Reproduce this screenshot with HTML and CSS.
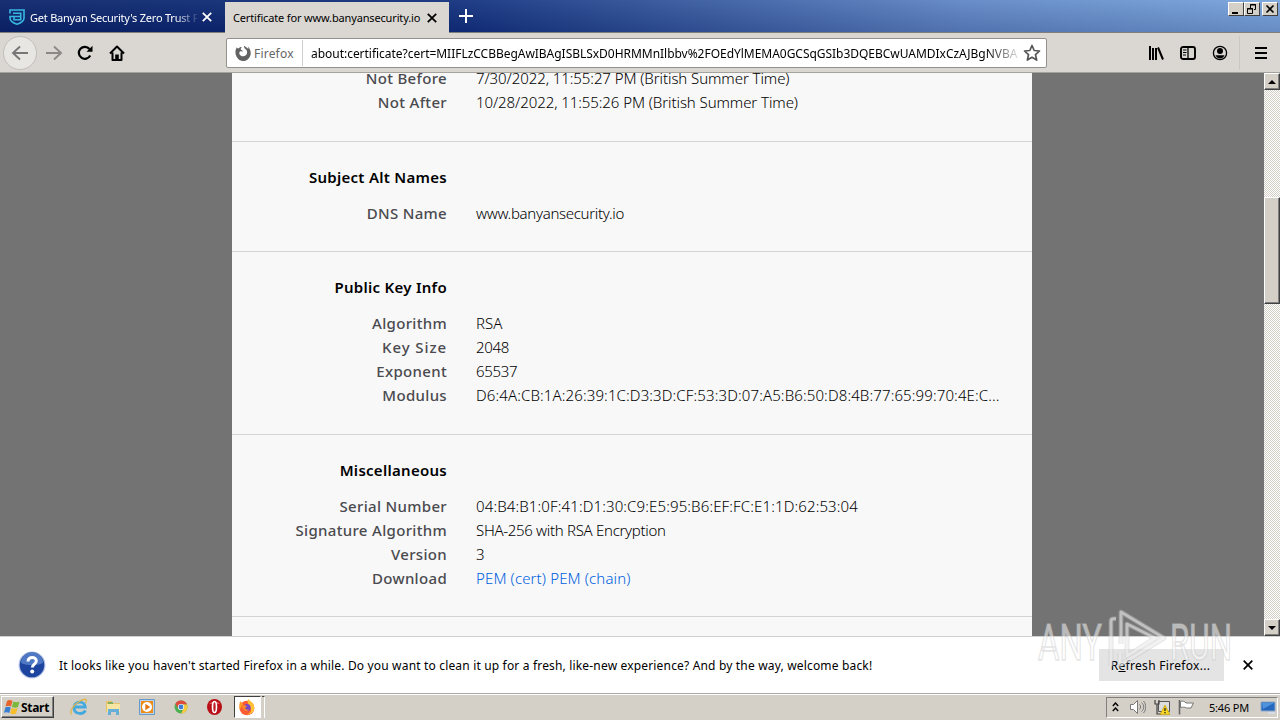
FILE: index.html
```
<!DOCTYPE html>
<html lang="en">
<head>
<meta charset="UTF-8" />
<meta name="viewport" content="width=device-width, initial-scale=1" />
<title>Certificate for www.banyansecurity.io</title>
<link rel="stylesheet" href="styles.css">
</head>
<body>

<header class="tabbar">
  <div class="tab tab-first">
    <svg class="favicon" width="16" height="16" viewBox="0 0 16 16" fill="none" stroke="#38b6e2" stroke-width="1.6"><path d="M1 4.500V1h14v8c0 3-3 5-7 6.200C4 14 1 12 1 9V7.500h4"/><path d="M4 4.300h7.700v6.500H5V7.500h6.500"/></svg>
    <span class="tab-title">Get Banyan Security's Zero Trust P</span>
    <svg class="tab-close" width="10" height="10" viewBox="0 0 10 10" stroke="currentColor" stroke-width="1.8"><path d="M.8.8l8.4 8.4M9.2.8L.8 9.2"/></svg>
  </div>
  <div class="tab tab-active">
    <span class="tab-title">Certificate for www.banyansecurity.io</span>
    <svg class="tab-close" width="10" height="10" viewBox="0 0 10 10" stroke="currentColor" stroke-width="1.8"><path d="M.8.8l8.4 8.4M9.2.8L.8 9.2"/></svg>
  </div>
  <svg class="new-tab" width="14" height="14" viewBox="0 0 14 14" stroke="#fff" stroke-width="2"><path d="M7 0v14M0 7h14"/></svg>
  <div class="window-buttons">
    <span class="win-btn"><svg width="14" height="12" viewBox="0 0 14 12"><path d="M3 9h6v2H3z"/></svg></span>
    <span class="win-btn"><svg width="14" height="12" viewBox="0 0 14 12" fill="none" stroke="#000"><path d="M5.5 5V1.5h5v5H9M5 2h6M2.500 5.500h5v5h-5zM2 6h6"/></svg></span>
    <span class="win-btn win-close"><svg width="14" height="12" viewBox="0 0 14 12" stroke="#000" stroke-width="1.6"><path d="M3.500 2.500l7 7M10.500 2.500l-7 7"/></svg></span>
  </div>
</header>

<nav class="toolbar">
  <span class="back"><svg width="18" height="16" viewBox="0 0 18 16" fill="none" stroke="#777" stroke-width="1.9"><path d="M17 8H2M9 1.500L2 8l7 6.500"/></svg></span>
  <svg class="forward" width="18" height="16" viewBox="0 0 18 16" fill="none" stroke="#8b8986" stroke-width="1.9"><path d="M1 8h15M9 1.500L16 8l-7 6.500"/></svg>
  <svg class="reload" width="16" height="16" viewBox="0 0 16 16" fill="none" stroke="#000" stroke-width="2.200"><path d="M13.200 10.500A6 6 0 1 1 12.500 4"/><path d="M15.500.8v6H9.500z" fill="#000" stroke="none"/></svg>
  <svg class="home" width="16" height="16" viewBox="0 0 16 16" fill="none" stroke="#000" stroke-width="2" stroke-linejoin="round"><path d="M1 8.500L8 1.500l7 7M3.500 7.500V15h9V7.500"/><path d="M6.200 15V9.500h3.600V15z" fill="#000" stroke="none"/></svg>
  <div class="urlbar">
    <svg class="identity-icon" width="16" height="16" viewBox="0 0 16 16"><path d="M1.800 2.300C0 5 0 9 1.500 11.500 3 14.500 5.500 16 8.200 16c4 0 7.500-3.500 7.500-7.800 0-2.700-1-5.200-3-6.700.6 1 .7 1.700.6 2.500C12 2 10.500 2.200 9 .7c0 2 .5 2.500 2 3.800 2.300 2.500 1 6.500-2.800 6.800-3 .2-4.700-2.500-3.500-4.500.8-.8 2-.5 3-.1.300-1-.8-1.700-2-2.200 0-1 .3-1.800 1-2.500C5 2 4 2.700 3.500 3.500c-.8 0-1.400-.4-1.700-1.200z" fill="#626262"/></svg>
    <span class="identity">Firefox</span>
    <span class="url">about:certificate?cert=MIIFLzCCBBegAwIBAgISBLSxD0HRMMnIlbbv%2FOEdYlMEMA0GCSqGSIb3DQEBCwUAMDIxCzAJBgNVBA</span>
    <svg class="star" width="18" height="18" viewBox="0 0 18 18" fill="none" stroke="#555" stroke-width="1.700" stroke-linejoin="round"><path d="M9 1.500l2.200 5 5.300.5-4 3.700 1.200 5.400L9 13.300l-4.700 2.800 1.200-5.400-4-3.700 5.300-.5z"/></svg>
  </div>
  <div class="tools">
    <svg class="library" width="16" height="16" viewBox="0 0 16 16" stroke="#000" stroke-width="2"><path d="M2 1v14M5 3v12M8 3v12M10 2.500l5 12"/></svg>
    <svg class="sidebar" width="16" height="14" viewBox="0 0 16 14" fill="none" stroke="#000" stroke-width="1.900"><rect x="1" y="1" width="14" height="12" rx="2"/><path d="M8 1v12" stroke-width="1.300"/><path d="M3 4h3.500M3 6.500h3.500M3 9h3" stroke-width="1"/></svg>
    <svg class="account" width="16" height="16" viewBox="0 0 16 16"><circle cx="8" cy="8" r="6.600" fill="none" stroke="#000" stroke-width="1.300"/><circle cx="8" cy="6" r="3"/><path d="M3.500 10.200h9C11.500 12.500 10 13.500 8 13.500s-3.500-1-4.500-3.300z"/></svg>
    <span class="divider"></span>
    <svg class="menu" width="12" height="12" viewBox="0 0 12 12" stroke="#000" stroke-width="2"><path d="M0 1h12M0 6h12M0 11h12"/></svg>
  </div>
</nav>

<main class="viewport">
  <div class="page">
    <article class="certificate">
      <section class="group group-validity">
        <dl>
          <dt>Not Before</dt><dd class="date">7/30/2022, 11:55:27 PM (British Summer Time)</dd>
          <dt>Not After</dt><dd class="date">10/28/2022, 11:55:26 PM (British Summer Time)</dd>
        </dl>
      </section>
      <section class="group">
        <h2>Subject Alt Names</h2>
        <dl>
          <dt>DNS Name</dt><dd class="tight">www.banyansecurity.io</dd>
        </dl>
      </section>
      <section class="group">
        <h2>Public Key Info</h2>
        <dl>
          <dt>Algorithm</dt><dd>RSA</dd>
          <dt class="wide">Key Size</dt><dd class="tight">2048</dd>
          <dt>Exponent</dt><dd class="tight">65537</dd>
          <dt>Modulus</dt><dd class="hex">D6:4A:CB:1A:26:39:1C:D3:3D:CF:53:3D:07:A5:B6:50:D8:4B:77:65:99:70:4E:C...</dd>
        </dl>
      </section>
      <section class="group">
        <h2>Miscellaneous</h2>
        <dl>
          <dt>Serial Number</dt><dd class="hex">04:B4:B1:0F:41:D1:30:C9:E5:95:B6:EF:FC:E1:1D:62:53:04</dd>
          <dt>Signature Algorithm</dt><dd class="tight">SHA-256 with RSA Encryption</dd>
          <dt>Version</dt><dd>3</dd>
          <dt>Download</dt><dd class="hex"><a>PEM (cert)</a> <a>PEM (chain)</a></dd>
        </dl>
      </section>
      <section class="group"></section>
    </article>
  </div>
  <div class="scrollbar">
    <span class="scroll-btn"><svg width="8" height="4" viewBox="0 0 8 4"><path d="M4 0l4 4H0z"/></svg></span>
    <span class="thumb"></span>
    <span class="scroll-btn scroll-down"><svg width="8" height="4" viewBox="0 0 8 4"><path d="M0 0h8L4 4z"/></svg></span>
  </div>
</main>

<aside class="notification">
  <svg class="help" width="28" height="28" viewBox="0 0 28 28"><circle cx="14" cy="14" r="13.500" fill="#b9c6e4"/><circle cx="14" cy="14" r="12.300" fill="#1d459f"/><path d="M3 12a11 11 0 0 1 22 0c-7 3-15 3-22 0z" fill="#4f78c4"/><path d="M10 10.500c0-5.500 8.500-5 8.300-.5-.1 3-4 3.200-4 6.500" fill="none" stroke="#fff" stroke-width="3"/><circle cx="14.200" cy="20.500" r="2" fill="#fff"/></svg>
  <span class="message">It looks like you haven't started Firefox in a while. Do you want to clean it up for a fresh, like-new experience? And by the way, welcome back!</span>
  <button class="refresh">R<u>e</u>fresh Firefox...</button>
  <svg class="dismiss" width="10" height="10" viewBox="0 0 10 10" stroke="#000" stroke-width="1.700"><path d="M.7.7l8.600 8.600M9.300.7L.7 9.300"/></svg>
</aside>

<footer class="taskbar">
  <button class="start">
    <svg width="17" height="16" viewBox="0 0 17 16"><path d="M3 2c2-1.500 4-1 5.500 0L7 7.500C5.500 6.500 3.500 6.500 1.500 7.500z" fill="#e8622c"/><path d="M9.300 2.500c2 1 4 1 6.200 0L14 8c-2 1-4 1-6 0z" fill="#7cb83b"/><path d="M1.300 8.500c2-1.200 4-1 5.500 0L5.300 14c-2-1.200-3.500-1-5.300-.2z" fill="#3b7fd0"/><path d="M7.600 9c2 1 4 1 6 0l-1.500 5.500c-2 1-4 1-6 0z" fill="#f6bd2d"/></svg>
    Start
  </button>
  <div class="quick">
    <svg width="18" height="18" viewBox="0 0 18 18" fill="none"><path d="M15.500 12.500c-3 5-12 3.500-11.500-3.500.5-6.500 11-6.500 11.300 0H5" stroke="#43a9df" stroke-width="2.800"/><path d="M2 16C-2 15 4 6 10 3c5-3 8-2 5.500 2" stroke="#ddb64a" stroke-width="1.300"/></svg>
    <svg width="18" height="18" viewBox="0 0 18 18"><path d="M2 3h6l1 2h7v9H2z" fill="#e8c468"/><path d="M3 6h13v8H3z" fill="#f7e5a3"/><path d="M4 17v-6h11v6h-3v-3H7v3z" fill="#67afd8"/><path d="M4 5h5" stroke="#5fa85d" stroke-width="1.500"/></svg>
    <svg width="18" height="18" viewBox="0 0 18 18"><path d="M1.500 1.500h15v15h-15z" fill="#b7d5ef" stroke="#6999c9"/><path d="M3 3h12v12H3z" fill="#ef8b16"/><circle cx="9" cy="9" r="5" fill="#fff"/><path d="M7.300 5.800l5 3.200-5 3.200z" fill="#e47713"/></svg>
    <svg width="18" height="18" viewBox="0 0 18 18"><circle cx="9" cy="9" r="6.500" fill="#4caf50"/><path d="M3.300 5.800A6.500 6.500 0 0 1 15 6.500H9L6.200 10.500z" fill="#df4a3c"/><path d="M15 6.500A6.500 6.500 0 0 1 9 15.500l3-5.500-3-3.500z" fill="#f9ca3e"/><circle cx="9" cy="9" r="3.100" fill="#fff"/><circle cx="9" cy="9" r="2.400" fill="#3e7bd5"/></svg>
    <svg width="18" height="18" viewBox="0 0 18 18"><ellipse cx="8.500" cy="9" rx="7.500" ry="8" fill="#b80f18"/><path d="M3 6a7 7 0 0 1 11 0z" fill="#dd5a5e"/><ellipse cx="8.500" cy="9" rx="2" ry="5.500" fill="#c2202a" stroke="#fff" stroke-width="1.600"/></svg>
  </div>
  <div class="task-active">
    <svg width="18" height="18" viewBox="0 0 18 18"><circle cx="9" cy="10" r="7.300" fill="#ff5a32"/><path d="M10 1c2 2 6.500 4 6.300 9-.3 5-5 7-8 6.500 5-1 6-5 3.500-8C10 6 9 4 10 1z" fill="#ffc233"/><path d="M2 3c0 2-1.500 4-.3 9L5 6z" fill="#ff9b28"/><circle cx="9" cy="9.500" r="3.600" fill="#7648c9"/><path d="M4 8c2-2 3 0 5 .2L7 10c1 2 3 2 4 1-1 3-6 3-7-3z" fill="#ff8a24"/></svg>
  </div>
  <span class="task-edge"></span>
  <div class="tray">
    <svg class="chevrons" width="7" height="10" viewBox="0 0 7 10" fill="none" stroke="#000" stroke-width="1.400"><path d="M.8 4l2.700-3 2.700 3M.8 9l2.700-3 2.700 3"/></svg>
    <svg class="sound" width="16" height="16" viewBox="0 0 16 16" fill="#fff" stroke="#777"><path d="M.5 5.500h3l4-4v13l-4-4h-3z"/><path d="M9.500 5.500c1.500 1.500 1.500 3.500 0 5M11.500 3.500c3 2.500 3 6.500 0 9M13.500 2c3 3.500 3 8.500 0 12" fill="none"/></svg>
    <svg class="network" width="16" height="16" viewBox="0 0 16 16"><path d="M4.500 2.500h11v10h-11z" fill="#ddd" stroke="#555"/><path d="M1 1v4h4V1M3 5v10h4" fill="none" stroke="#444" stroke-width="1.200"/><path d="M11 6l5 9.500H6z" fill="#f8d521" stroke="#b59400" stroke-width=".6"/><path d="M11 9v3M11 13v1.300" stroke="#222" stroke-width="1.300"/></svg>
    <svg class="flag" width="17" height="16" viewBox="0 0 17 16"><path d="M1.500 1v14.500" stroke="#666" stroke-width="1.600"/><path d="M2.500 2.500c3-1 4 0 5.500 1.500h7.500L13 9H8.500c-2-1-3-1-6-.5z" fill="#fff" stroke="#777"/></svg>
    <span class="clock">5:46 PM</span>
    <svg class="desktop" width="16" height="13" viewBox="0 0 16 13"><path d="M1 1h14v9H1z" fill="#2467bd" stroke="#8ea8cb"/><path d="M2 2h12L3 8z" fill="#4f93dc"/><path d="M8 11h7v2H8z" fill="#d5dce5"/></svg>
  </div>
</footer>

<!-- Recording overlay -->
<svg class="watermark" width="204" height="66" viewBox="0 0 204 66">
  <g fill="#fff" fill-opacity=".5" stroke="#c4c4c4" stroke-opacity=".45" stroke-width="1.600">
    <text x="2" y="54" textLength="64" lengthAdjust="spacingAndGlyphs">ANY</text>
    <text x="134" y="54" textLength="62" lengthAdjust="spacingAndGlyphs">RUN</text>
  </g>
  <g fill="none" stroke-linejoin="round">
    <path d="M75 60V15q0-3 5-2M85 38V6l43 26-44 27V47M91 18v32l28-18z" stroke="#bbb" stroke-opacity=".35" stroke-width="5"/>
    <path d="M75 60V15q0-3 5-2M85 38V6l43 26-44 27V47M91 18v32l28-18z" stroke="#fff" stroke-opacity=".45" stroke-width="3"/>
  </g>
</svg>

</body>
</html>
```
FILE: styles.css
```
* {
  box-sizing: border-box;
}
body {
  margin: 0;
  width: 1280px;
  height: 720px;
  overflow: hidden;
  display: flex;
  flex-direction: column;
  font-family: "Noto Sans", "DejaVu Sans", sans-serif;
  font-size: 12px;
  color: #000;
  position: relative;
}
svg {
  display: block;
  flex: none;
}
button {
  font: inherit;
  border: none;
}

/* Tabs */
.tabbar {
  height: 33px;
  flex: none;
  display: flex;
  background: linear-gradient(rgba(255,255,255,0.06), rgba(0,0,50,0.15)), linear-gradient(90deg, #0a246a, #102f7c 35%, #5f86c4 75%, #78a4dc);
  border-bottom: 1px solid #807e7b;
}
.tab {
  display: flex;
  align-items: center;
}
.tab-first {
  width: 225px;
  padding: 2px 0 0 9px;
  color: #fff;
}
.tab-title {
  overflow: hidden;
  white-space: nowrap;
  font-size: 11px;
}
.tab-first .tab-title {
  width: 167px;
  margin-left: 5px;
  letter-spacing: -0.22px;
  -webkit-mask-image: linear-gradient(90deg, #000 145px, transparent 170px);
}
.tab-first .tab-close {
  margin-left: 5px;
}
.tab-active {
  width: 224px;
  height: 31px;
  margin-top: 2px;
  padding-left: 8px;
  background: #dad7d2;
}
.tab-active .tab-title {
  width: 188px;
  letter-spacing: -0.15px;
}
.tab-active .tab-close {
  margin-left: 6px;
}
.new-tab {
  margin: 9px 0 0 10px;
}
.window-buttons {
  display: flex;
  margin: 2px 2px 0 auto;
}
.win-btn {
  width: 16px;
  height: 14px;
  background: #d4d0c8;
  border: 1px solid;
  border-color: #fff #404040 #404040 #fff;
}
.win-close {
  margin-left: 2px;
}

/* Toolbar */
.toolbar {
  height: 40px;
  flex: none;
  display: flex;
  align-items: center;
  background: #dad7d2;
  border-bottom: 1px solid #a5a29d;
}
.back {
  width: 34px;
  height: 34px;
  margin-left: 3px;
  display: flex;
  align-items: center;
  justify-content: center;
  border: 1px solid #c2bfba;
  border-radius: 50%;
  background: #e8e6e2;
}
.forward { margin-left: 8px; }
.reload { margin-left: 14px; }
.home { margin-left: 16px; }
.urlbar {
  width: 821px;
  height: 30px;
  margin-left: 101px;
  padding-left: 8px;
  display: flex;
  align-items: center;
  background: #fff;
  border: 1px solid #93918d;
  border-radius: 2px;
}
.identity {
  width: 49px;
  height: 26px;
  line-height: 27px;
  margin-left: 3px;
  border-right: 1px solid #ccc;
  color: #666;
  letter-spacing: 0.2px;
}
.url {
  width: 707px;
  margin-left: 8px;
  padding-top: 1px;
  overflow: hidden;
  white-space: nowrap;
  letter-spacing: -0.03px;
  -webkit-mask-image: linear-gradient(90deg, #000 675px, transparent 712px);
}
.star { margin-left: 5px; }
.tools {
  display: flex;
  align-items: center;
  height: 36px;
  margin-left: 101px;
}
.sidebar { margin-left: 16px; }
.account { margin-left: 16px; }
.divider {
  width: 1px;
  height: 34px;
  margin-left: 11px;
  background: #cbc8c3;
}
.menu { margin-left: 15px; }

/* Certificate page */
.viewport {
  height: 563px;
  flex: none;
  display: flex;
}
.page {
  flex: 1;
  overflow: hidden;
  padding-left: 232px;
  background: #737373;
}
.certificate {
  width: 800px;
  height: 600px;
  margin-top: -7px;
  background: #f8f8f8;
  font-size: 15px;
  line-height: 24px;
}
.group {
  padding: 23px 0 26.3px;
  border-top: 1px solid #d4d4d6;
}
.group-validity {
  padding: 0 0 27px;
  border-top: none;
}
.group h2 {
  width: 215px;
  margin: 0 0 12px;
  font-size: 15px;
  font-weight: 600;
  letter-spacing: 0.28px;
  text-align: right;
}
.group dl {
  display: grid;
  grid-template-columns: 215px 1fr;
  column-gap: 29px;
  margin: 0;
}
.group dt {
  text-align: right;
  font-weight: 500;
  letter-spacing: 0.32px;
  color: #4a4a4f;
}
.group dt.wide {
  letter-spacing: 0.9px;
}
.group dd {
  margin: 0;
  font-weight: 300;
  white-space: nowrap;
}
.group dd.date { letter-spacing: -0.08px; }
.group dd.tight { letter-spacing: -0.31px; }
.group dd.hex { letter-spacing: 0.125px; }
.group a {
  color: #0060df;
}

/* Classic scrollbar */
.scrollbar {
  width: 16px;
  display: flex;
  flex-direction: column;
  background: repeating-conic-gradient(#d4d0c8 0 25%, #fff 0 50%) 0 0 / 2px 2px;
}
.scroll-btn, .thumb {
  background: #d4d0c8;
  border: 1px solid;
  border-color: #fff #404040 #404040 #fff;
  box-shadow: inset -1px -1px #808080;
}
.scroll-btn {
  height: 17px;
  display: flex;
  align-items: center;
  justify-content: center;
}
.thumb {
  height: 107px;
  margin-top: 107px;
}
.scroll-down {
  margin-top: auto;
}

/* Notification bar */
.notification {
  height: 57px;
  flex: none;
  display: flex;
  align-items: center;
  padding-left: 18px;
  background: #fff;
  border-top: 1px solid #d0d0d0;
}
.message {
  width: 814px;
  margin-left: 13px;
  white-space: nowrap;
  letter-spacing: 0.17px;
}
.refresh {
  width: 125px;
  height: 32px;
  margin-left: 226px;
  padding: 0 2px 0 0;
  background: #e4e4e4;
  letter-spacing: 0.3px;
}
.dismiss { margin-left: 19px; }

/* Taskbar */
.taskbar {
  height: 27px;
  flex: none;
  display: flex;
  align-items: center;
  background: #d4d0c8;
  border-top: 1px solid #aaa;
  box-shadow: inset 0 1px #fff;
}
.start {
  width: 53px;
  height: 22px;
  margin-left: 1px;
  padding: 0 2px;
  display: flex;
  align-items: center;
  background: #d4d0c8;
  border: 1px solid;
  border-color: #fff #404040 #404040 #fff;
  box-shadow: inset -1px -1px #808080;
  font-weight: 700;
  letter-spacing: -0.3px;
}
.quick {
  display: flex;
  gap: 16px;
  margin-left: 16px;
}
.task-active {
  width: 27px;
  height: 22px;
  margin-left: 10px;
  padding: 1px 0 0 3px;
  background: #fff;
  border: 1px solid;
  border-color: #404040 #fff #fff #404040;
}
.task-edge {
  width: 3px;
  height: 22px;
  margin-left: 1px;
  border-top: 1px solid #404040;
  border-right: 1px solid #fff;
}
.tray {
  width: 172px;
  height: 21px;
  margin-left: auto;
  margin-right: 2px;
  padding-left: 5px;
  display: flex;
  align-items: center;
  border: 1px solid;
  border-color: #808080 #fff #fff #808080;
}
.sound { margin-left: 11px; }
.network { margin-left: 8px; }
.flag { margin-left: 8px; }
.clock {
  width: 40px;
  margin-left: 14px;
  white-space: nowrap;
  font-size: 11px;
  letter-spacing: -0.2px;
}
.desktop { margin-left: 11px; }

.watermark {
  position: absolute;
  left: 1036px;
  top: 606px;
  font-family: "Roboto", sans-serif;
  font-size: 50px;
  pointer-events: none;
}
```
